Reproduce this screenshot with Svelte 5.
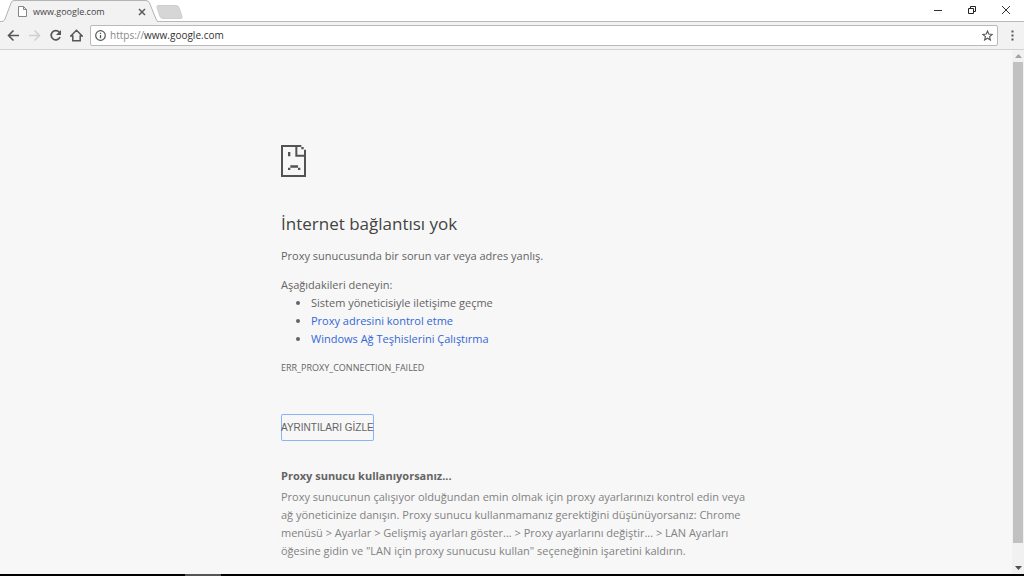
<script>
	let address = "www.google.com";
	let showDetails = true;

	const tips = [
		{ text: "Sistem yöneticisiyle iletişime geçme" },
		{ text: "Proxy adresini kontrol etme", href: "#proxy" },
		{ text: "Windows Ağ Teşhislerini Çalıştırma", href: "#diagnose" },
	];
</script>

<div class="browser">
	<header class="titlebar">
		<div class="tab">
			<svg class="tab-shape" width="158" height="22" viewBox="0 0 158 22">
				<path d="M0 22C3 22 4 21 5 19L11 3Q12 .5 14 .5H146Q148.500 .5 149.500 3L156 19Q157 21.500 158 22Z" fill="#f2f2f2" />
				<path d="M0 21.500C3 21.500 4 21 5 19L11 3Q12 .5 14 .5H146Q148.500 .5 149.500 3L156 19Q157 21.500 158 21.500" fill="none" stroke="#b4b4b4" />
			</svg>
			<svg width="9" height="11" viewBox="0 0 9 11">
				<path d="M.5 .5H5.500L8.500 3.500V10.500H.5ZM5.500 .5V3.500H8.500" fill="#fff" stroke="#858585" />
			</svg>
			<span class="tab-title">{address}</span>
			<button class="tab-close" aria-label="Sekmeyi kapat">
				<svg width="8" height="8" viewBox="0 0 8 8"><path d="M1 1L7 7M7 1L1 7" stroke="#5a5a5a" stroke-width="1.500" /></svg>
			</button>
		</div>
		<button class="new-tab" aria-label="Yeni sekme">
			<svg width="27" height="14" viewBox="0 0 27 14">
				<path d="M2 .5H20Q22 .5 23 2.500L26 11.500Q26.500 13.500 25 13.500H7Q5 13.500 4 11.500L1 2.500Q.5 .5 2 .5Z" fill="#d6d6d6" stroke="#cecece" />
			</svg>
		</button>
		<div class="window-buttons">
			<button aria-label="Simge durumuna küçült">
				<svg width="10" height="10" viewBox="0 0 10 10"><path d="M1 5.500H9" stroke="#333" /></svg>
			</button>
			<button aria-label="Önceki boyut">
				<svg width="10" height="10" viewBox="0 0 10 10"><path d="M1.500 3.500H6.500V8.500H1.500ZM3.500 3V1.500H8.500V6.500H7" fill="none" stroke="#222" /></svg>
			</button>
			<button aria-label="Kapat">
				<svg width="10" height="10" viewBox="0 0 10 10"><path d="M1 1L9 9M9 1L1 9" stroke="#333" /></svg>
			</button>
		</div>
	</header>

	<nav class="toolbar">
		<button aria-label="Geri">
			<svg width="13" height="13" viewBox="0 0 13 13"><path d="M12 6.500H2M6.500 1.500L1.500 6.500L6.500 11.500" fill="none" stroke="#555" stroke-width="1.600" /></svg>
		</button>
		<button aria-label="İleri" disabled>
			<svg width="13" height="13" viewBox="0 0 13 13"><path d="M1 6.500H11M6.500 1.500L11.500 6.500L6.500 11.500" fill="none" stroke="#d0d0d0" stroke-width="1.500" /></svg>
		</button>
		<button aria-label="Yenile">
			<svg width="13" height="13" viewBox="0 0 13 13">
				<path d="M10.300 3.300A4.600 4.600 0 1 0 11 8" fill="none" stroke="#555" stroke-width="1.700" />
				<path d="M12 1V6H7Z" fill="#555" />
			</svg>
		</button>
		<button aria-label="Ana sayfa">
			<svg width="13" height="13" viewBox="0 0 13 13"><path d="M.8 7L6.500 1.300L12.200 7H10.200V11.700H2.800V7Z" fill="none" stroke="#555" stroke-width="1.500" /></svg>
		</button>
		<div class="omnibox">
			<svg width="11" height="11" viewBox="0 0 11 11">
				<circle cx="5.500" cy="5.500" r="4.800" fill="none" stroke="#555" stroke-width="1.200" />
				<path d="M5.500 5V8.300M5.500 2.700V4" stroke="#555" stroke-width="1.300" />
			</svg>
			<a class="address" href="https://www.google.com"><span class="scheme">https://</span>{address}</a>
			<button class="star" aria-label="Bu sayfaya yer işareti koy">
				<svg width="11" height="11" viewBox="0 0 11 11">
					<path d="M5.500 1L6.800 4.100L10.200 4.400L7.600 6.600L8.400 10L5.500 8.200L2.600 10L3.400 6.600L.8 4.400L4.200 4.100Z" fill="none" stroke="#555" stroke-width="1.100" />
				</svg>
			</button>
		</div>
		<button class="menu" aria-label="Menü">
			<svg width="3" height="11" viewBox="0 0 3 11"><path d="M.5 .5h2v2h-2zM.5 4.500h2v2h-2zM.5 8.500h2v2h-2z" fill="#555" /></svg>
		</button>
	</nav>

	<div class="viewport">
		<main>
			<div class="error">
				<svg class="sad-page" width="25" height="32" viewBox="0 0 75 96">
					<path d="M0 0H61V6H6V90H69V14H75V96H0Z" fill="#535353" />
					<path d="M43 0H49V29H75V35H43ZM61 6H68V13H61Z" fill="#535353" />
					<path d="M21 21H28V34H21ZM28 61H51V68H28ZM21 68H28V75H21ZM51 68H58V75H51Z" fill="#535353" />
				</svg>
				<h1>İnternet bağlantısı yok</h1>
				<p class="summary">Proxy sunucusunda bir sorun var veya adres yanlış.</p>
				<p>Aşağıdakileri deneyin:</p>
				<ul>
					{#each tips as tip}
						<li>
							{#if tip.href}
								<a href={tip.href}>{tip.text}</a>
							{:else}
								{tip.text}
							{/if}
						</li>
					{/each}
				</ul>
				<div class="error-code">ERR_PROXY_CONNECTION_FAILED</div>
				<button class="details-button" on:click={() => { showDetails = !showDetails; }}>
					{showDetails ? "AYRINTILARI GİZLE" : "AYRINTILAR"}
				</button>
				{#if showDetails}
					<section class="details">
						<h2>Proxy sunucu kullanıyorsanız...</h2>
						<p>
							Proxy sunucunun çalışıyor olduğundan emin olmak için proxy ayarlarınızı kontrol edin veya<br />
							ağ yöneticinize danışın. Proxy sunucu kullanmamanız gerektiğini düşünüyorsanız: Chrome<br />
							menüsü &gt; Ayarlar &gt; Gelişmiş ayarları göster... &gt; Proxy ayarlarını değiştir... &gt; LAN Ayarları<br />
							öğesine gidin ve "LAN için proxy sunucusu kullan" seçeneğinin işaretini kaldırın.
						</p>
					</section>
				{/if}
			</div>
		</main>
		<div class="scrollbar">
			<svg width="7" height="4" viewBox="0 0 7 4"><path d="M0 4L3.500 0L7 4Z" fill="#a3a3a3" /></svg>
			<div class="thumb"></div>
			<svg width="7" height="4" viewBox="0 0 7 4"><path d="M0 0L3.500 4L7 0Z" fill="#505050" /></svg>
		</div>
	</div>
	<footer class="taskbar"><span></span></footer>
</div>

<style>
	:global(body) {
		margin: 0;
	}
	.browser {
		display: flex;
		flex-direction: column;
		height: 100vh;
		background: #f7f7f7;
		color: #646464;
		font-family: "Open Sans", "Noto Sans", sans-serif;
		font-size: 11px;
	}
	button {
		display: flex;
		align-items: center;
		justify-content: center;
		padding: 0;
		border: none;
		background: transparent;
		color: inherit;
	}
	svg {
		display: block;
		flex: none;
	}
	.titlebar {
		display: flex;
		box-sizing: border-box;
		height: 22px;
		background: #fff;
		box-shadow: inset 0 -1px #b8b8b8;
	}
	.tab {
		position: relative;
		display: flex;
		align-items: center;
		box-sizing: border-box;
		width: 158px;
		padding: 1px 12px 0 18px;
		color: #444;
		font-size: 9px;
	}
	.tab > * {
		position: relative;
	}
	.tab .tab-shape {
		position: absolute;
		top: 0;
		left: 0;
	}
	.tab-title {
		flex: 1;
		margin-left: 6px;
	}
	.tab-close {
		width: 8px;
		height: 8px;
	}
	.new-tab {
		height: 14px;
		margin: 5px 0 0 -2px;
	}
	.window-buttons {
		display: flex;
		margin-left: auto;
		padding-right: 1px;
	}
	.window-buttons button {
		width: 34px;
		height: 20px;
	}
	.toolbar {
		display: flex;
		align-items: center;
		gap: 8px;
		box-sizing: border-box;
		height: 28px;
		padding: 0 6px 1px 7px;
		border-bottom: 1px solid #d2d2d2;
		background: #f2f2f2;
	}
	.omnibox {
		display: flex;
		flex: 1;
		align-items: center;
		gap: 4px;
		box-sizing: border-box;
		height: 21px;
		margin-left: -1px;
		padding: 0 4px;
		border: 1px solid #b9b9b9;
		border-radius: 2px;
		background: #fff;
	}
	.address {
		flex: 1;
		color: #333;
		font-size: 10px;
		text-decoration: none;
	}
	.scheme {
		color: #888;
	}
	.menu {
		width: 12px;
	}
	.viewport {
		display: flex;
		flex: 1;
		min-height: 0;
	}
	main {
		flex: 1;
		overflow: hidden;
	}
	.error {
		max-width: 450px;
		margin: 0 auto;
		padding-top: 95px;
		line-height: 18px;
	}
	h1 {
		margin: 34px 0 10px;
		color: #434343;
		font-size: 17px;
		font-weight: 400;
		line-height: 26px;
	}
	p {
		margin: 0;
	}
	.summary {
		margin-bottom: 11px;
	}
	ul {
		margin: 0;
		padding-left: 30px;
	}
	.error a {
		color: #3367d6;
		text-decoration: none;
	}
	.error-code {
		margin-top: 11px;
		font-size: 9px;
	}
	.details-button {
		height: 27px;
		margin-top: 37px;
		border-radius: 2px;
		box-shadow: inset 0 0 0 1px #8ab4f8;
		font-family: "Liberation Sans", sans-serif;
		font-size: 10px;
		white-space: nowrap;
	}
	.details {
		margin-top: 26px;
	}
	h2 {
		margin: 0 0 3px;
		font-size: 11px;
		font-weight: 700;
		line-height: 18px;
	}
	.details p {
		color: #828282;
		white-space: nowrap;
	}
	.scrollbar {
		display: flex;
		flex-direction: column;
		align-items: center;
		gap: 4px;
		box-sizing: border-box;
		width: 12px;
		padding: 4px 0;
		background: #f1f1f1;
	}
	.thumb {
		flex: 1;
		width: 10px;
		margin-bottom: 19px;
		background: #c1c1c1;
	}
	.taskbar {
		height: 2px;
		padding-left: 185px;
		background: #000;
	}
	.taskbar span {
		display: block;
		width: 36px;
		height: 2px;
		background: #555;
	}
</style>
